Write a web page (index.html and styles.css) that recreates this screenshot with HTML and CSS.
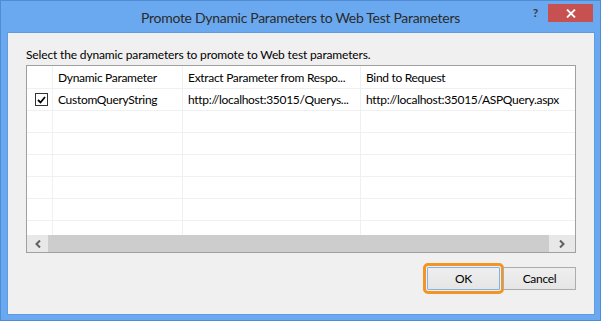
FILE: index.html
```html
<!DOCTYPE html>
<html lang="en">
<head>
  <meta charset="UTF-8">
  <title>Promote Dynamic Parameters to Web Test Parameters</title>
  <link rel="stylesheet" href="styles.css">
</head>
<body>

  <div class="window">
    <div class="titlebar">
      <span></span>
      <span class="title">Promote Dynamic Parameters to Web Test Parameters</span>
      <div class="controls">
        <span class="help">?</span>
        <span class="close">
          <svg width="10" height="9" viewBox="0 0 10 9">
            <path d="M1 0.5 L9 8.5 M9 0.5 L1 8.5" stroke="#fff" stroke-width="1.8" fill="none"/>
          </svg>
        </span>
      </div>
    </div>

    <div class="client">
      <p class="intro">Select the dynamic parameters to promote to Web test parameters.</p>

      <div class="list">
        <div class="rows">
          <div class="row head">
            <div class="cell"></div>
            <div class="cell">Dynamic Parameter</div>
            <div class="cell">Extract Parameter from Respo...</div>
            <div class="cell">Bind to Request</div>
          </div>
          <div class="row">
            <div class="cell check-cell">
              <span class="check">
                <svg width="9" height="8" viewBox="0 0 9 8">
                  <path d="M1 4 L3.5 6.5 L8 1" stroke="#000" stroke-width="1.8" fill="none"/>
                </svg>
              </span>
            </div>
            <div class="cell">CustomQueryString</div>
            <div class="cell">http://localhost:35015/Querys...</div>
            <div class="cell">http://localhost:35015/ASPQuery.aspx</div>
          </div>
          <div class="row"><div class="cell"></div><div class="cell"></div><div class="cell"></div><div class="cell"></div></div>
          <div class="row"><div class="cell"></div><div class="cell"></div><div class="cell"></div><div class="cell"></div></div>
          <div class="row"><div class="cell"></div><div class="cell"></div><div class="cell"></div><div class="cell"></div></div>
          <div class="row"><div class="cell"></div><div class="cell"></div><div class="cell"></div><div class="cell"></div></div>
          <div class="row"><div class="cell"></div><div class="cell"></div><div class="cell"></div><div class="cell"></div></div>
          <div class="row"><div class="cell"></div><div class="cell"></div><div class="cell"></div><div class="cell"></div></div>
        </div>

        <div class="hscroll">
          <span class="arrow left">
            <svg width="6" height="8" viewBox="0 0 6 8">
              <path d="M5 0.5 L1.5 4 L5 7.5" stroke="#606060" stroke-width="2" fill="none"/>
            </svg>
          </span>
          <span class="track"></span>
          <span class="arrow right">
            <svg width="6" height="8" viewBox="0 0 6 8">
              <path d="M1 0.5 L4.5 4 L1 7.5" stroke="#606060" stroke-width="2" fill="none"/>
            </svg>
          </span>
        </div>
      </div>

      <div class="buttons">
        <button class="btn default">OK</button>
        <button class="btn">Cancel</button>
      </div>
    </div>
  </div>

</body>
</html>
```

FILE: styles.css
```css
:root {
  --frame: #6aa9ef;
  --frame-edge: #4f8cd3;
  --face: #f0f0f0;
  --grid: #f0f0f0;
  --text: #000;
}

* {
  box-sizing: border-box;
}

body {
  margin: 0;
  font-family: 'Segoe UI', Lato, sans-serif;
  font-size: 12px;
  letter-spacing: -0.3px;
  color: var(--text);
}

.window {
  width: 601px;
  height: 321px;
  background: var(--frame);
  border: 1px solid var(--frame-edge);
  display: flex;
  flex-direction: column;
}

/* title bar */
.titlebar {
  height: 31px;
  display: grid;
  grid-template-columns: 1fr auto 1fr;
  align-items: start;
}

.title {
  font-size: 14px;
  color: #2b2b2b;
  line-height: 20px;
  margin-top: 7px;
}

.controls {
  display: flex;
  justify-content: flex-end;
  align-items: flex-start;
  margin-right: 7px;
}

.help {
  font-size: 12px;
  font-weight: bold;
  color: #3a3a3a;
  line-height: 14px;
  margin-top: 5px;
  margin-right: 10px;
}

.close {
  width: 45px;
  height: 18px;
  margin-top: 3px;
  background: #c75050;
  display: flex;
  align-items: center;
  justify-content: center;
}

.close svg {
  display: block;
}

/* client area */
.client {
  flex: 1;
  margin: 0 5px 5px 6px;
  background: var(--face);
  border: 1px solid #5e9ce2;
  padding: 14px 18px 0 18px;
  display: flex;
  flex-direction: column;
}

.intro {
  margin: 0 0 3px;
  line-height: 15px;
  letter-spacing: -0.15px;
}

/* list view */
.list {
  height: 188px;
  border: 1px solid #a0a0a0;
  background: #fff;
  display: flex;
  flex-direction: column;
}

.rows {
  flex: 1;
  overflow: hidden;
}

.row {
  display: grid;
  grid-template-columns: 26px 130px 178px 1fr;
  height: 22px;
}

.row.head {
  height: 23px;
}

.cell {
  border-right: 1px solid var(--grid);
  border-bottom: 1px solid var(--grid);
  padding-left: 5px;
  line-height: 21px;
  white-space: nowrap;
  overflow: hidden;
}

.head .cell {
  line-height: 23px;
}

.cell:last-child {
  border-right: none;
}

.check-cell {
  padding-left: 8px;
  display: flex;
  align-items: center;
}

.check {
  width: 13px;
  height: 13px;
  border: 1px solid #333;
  background: #fff;
  display: flex;
  align-items: center;
  justify-content: center;
}

.check svg {
  display: block;
}

.hscroll {
  height: 17px;
  display: flex;
  background: #cdcdcd;
}

.arrow {
  width: 21px;
  background: #e8e8e8;
  display: flex;
  align-items: center;
  justify-content: center;
}

.arrow.right {
  width: 26px;
}

.track {
  flex: 1;
}

/* buttons */
.buttons {
  display: flex;
  justify-content: flex-end;
  gap: 3px;
  margin-top: 14px;
}

.btn {
  width: 73px;
  height: 23px;
  font-family: inherit;
  font-size: 12px;
  letter-spacing: inherit;
  color: #000;
  background: linear-gradient(#efefef, #e5e5e5);
  border: 1px solid #acacac;
  padding: 0;
}

.btn.default {
  border-color: #7eb4ea;
  outline: 3px solid #f39423;
  outline-offset: 1px;
  border-radius: 1px;
}
```
